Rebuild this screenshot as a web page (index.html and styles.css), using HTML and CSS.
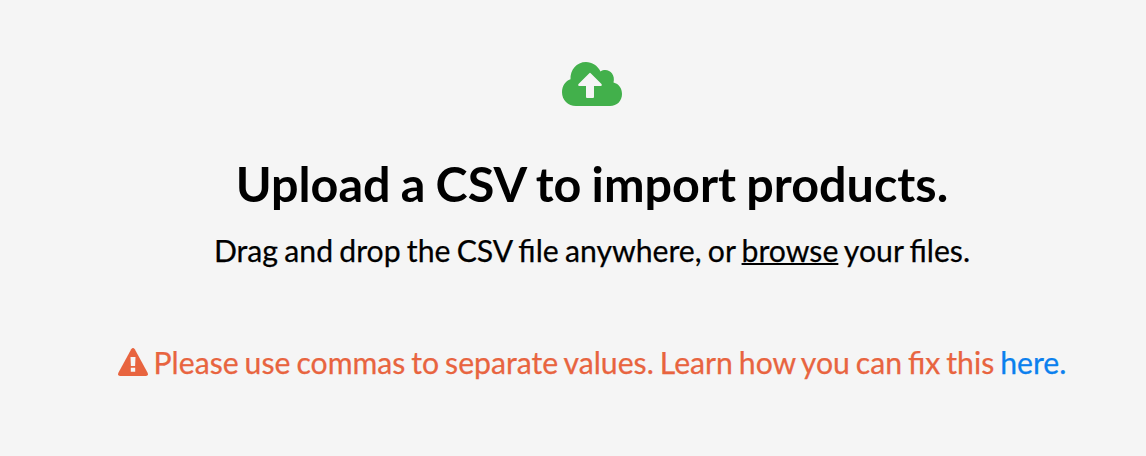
FILE: index.html
```html
<!DOCTYPE html>
<html lang="en">
<head>
<meta charset="utf-8">
<title>Import products</title>
<link rel="stylesheet" href="styles.css">
</head>
<body>
<main class="dropzone">
  <svg class="cloud" viewBox="0 0 60 44" aria-hidden="true"><path fill="currentColor" d="M14 44C6 44 0 38 0 30.300C0 24 3.500 19 8.500 17.300C8 8 14.500 0 24 0C30 0 35.500 3.500 38.500 9.500C45 5 54 11 51.500 20.600C57 22 60 26.500 60 32C60 39 55 44 48 44Z"/><path class="arrow" d="M27.300 11.200Q28 10.500 28.700 11.200L39.500 22.100Q40.600 23.800 39 24H32V35Q32 36 31 36H25Q24 36 24 35V24H17Q15.400 23.800 16.500 22.100Z"/></svg>
  <h1 class="title">Upload a CSV to import products.</h1>
  <p class="hint">Drag and drop the CSV file anywhere, or <a class="browse" href="#">browse</a> your files.</p>
  <p class="error"><svg class="warning" viewBox="0 0 30 28" aria-hidden="true"><path fill="currentColor" d="M13.200 1.200Q15 -1.200 16.800 1.200L29.600 24.700Q30.700 27.600 28 28H2Q-.700 27.600.400 24.700Z"/><path class="mark" d="M12.500 9H17.500L17.100 18H12.900ZM12.800 19.800H17.200V23.700H12.800Z"/></svg><span>Please use commas to separate values. Learn how you can fix this <a class="help" href="#">here.</a></span></p>
</main>
</body>
</html>
```
FILE: styles.css
```css
body {
  margin: 0;
  background: #f5f5f5;
  color: #000;
  font-family: Lato, "Liberation Sans", sans-serif;
}
.dropzone {
  box-sizing: border-box;
  height: 456px;
  padding: 62px 0 0 38px;
  display: flex;
  flex-direction: column;
  align-items: center;
}
.cloud {
  width: 60px;
  height: 44px;
  color: #42b04b;
}
.arrow, .mark { fill: #f5f5f5; }
.title {
  margin: 48px 0 0;
  font-size: 48.5px;
  line-height: 58px;
  font-weight: 700;
  word-spacing: -1.6px;
  white-space: nowrap;
}
.hint {
  margin: 20px 0 0;
  font-size: 30.2px;
  line-height: 36px;
  word-spacing: -1.5px;
  white-space: nowrap;
  -webkit-text-stroke: 0.25px currentColor;
}
.browse {
  color: inherit;
  text-decoration: underline;
  text-decoration-thickness: 2px;
}
.error {
  display: flex;
  align-items: center;
  gap: 6px;
  margin: 76px 0 0;
  color: #e8643f;
  font-size: 30.2px;
  line-height: 36px;
  word-spacing: -1.8px;
  white-space: nowrap;
  -webkit-text-stroke: 0.25px currentColor;
}
.warning {
  width: 30px;
  height: 28px;
}
.help {
  color: #0b80ee;
  text-decoration: none;
}
```
